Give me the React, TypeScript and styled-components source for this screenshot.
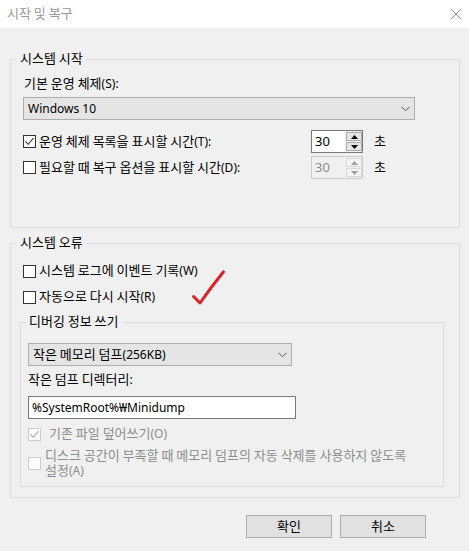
import React from 'react';
import styled, { createGlobalStyle } from 'styled-components';

const GlobalStyle = createGlobalStyle`
  html, body {
    margin: 0;
    padding: 0;
    background: #f0f0f0;
  }
  body {
    font-family: "Noto Sans", "Noto Sans CJK KR", sans-serif;
    font-size: 12px;
    color: #000;
  }
`;

// Hangul runs are a touch larger than the Latin text, like Malgun Gothic next to Segoe UI
const Hangul = styled.span`
  font-family: "Noto Sans CJK KR", sans-serif;
  font-size: 13px;
  line-height: 1;
`;

const T: React.FC<{ children: string }> = ({ children }) => {
  const parts = children.split(/([\uAC00-\uD7A3]+(?: [\uAC00-\uD7A3]+)*)/);
  return (
    <>
      {parts.map((p, i) => (i % 2 === 1 ? <Hangul key={i}>{p}</Hangul> : p))}
    </>
  );
};

const Window = styled.div`
  position: relative;
  width: 469px;
  height: 551px;
  background: #f0f0f0;
  overflow: hidden;
`;

const TitleBar = styled.div`
  box-sizing: border-box;
  height: 28px;
  padding: 0 7px;
  background: #fff;
  display: flex;
  align-items: center;
  justify-content: space-between;
`;

const Title = styled.span`
  color: #999;
  line-height: 16px;
`;

const Body = styled.div`
  padding: 23px 9px 0 10px;
`;

const Group = styled.fieldset<{ $width: number; $pad: string; $mt?: number }>`
  box-sizing: border-box;
  width: ${(p) => p.$width}px;
  min-width: 0;
  margin: ${(p) => p.$mt || 0}px 0 0;
  padding: ${(p) => p.$pad};
  border: 1px solid #dcdcdc;
`;

const Legend = styled.legend<{ $shift: number }>`
  padding: 0 3px;
  margin-left: ${(p) => p.$shift}px;
  line-height: 16px;
`;

const Label = styled.div<{ $mt?: number; $ml?: number }>`
  margin-top: ${(p) => p.$mt || 0}px;
  margin-left: ${(p) => p.$ml || 0}px;
  line-height: 16px;
`;

const Select = styled.div<{ $width: number; $mt?: number }>`
  box-sizing: border-box;
  width: ${(p) => p.$width}px;
  height: 23px;
  margin-top: ${(p) => p.$mt || 0}px;
  padding: 0 4px;
  background: #e5e5e5;
  border: 1px solid #adadad;
  display: flex;
  align-items: center;
  justify-content: space-between;
  line-height: 16px;
`;

const TextBox = styled.div<{ $width: number; $mt?: number }>`
  box-sizing: border-box;
  width: ${(p) => p.$width}px;
  height: 23px;
  margin-top: ${(p) => p.$mt || 0}px;
  padding: 0 3px;
  background: #fff;
  border: 1px solid #7a7a7a;
  display: flex;
  align-items: center;
  line-height: 16px;
`;

const OptionRow = styled.div<{ $mt: number }>`
  display: grid;
  grid-template-columns: 288px 52px auto;
  align-items: center;
  height: 23px;
  margin-top: ${(p) => p.$mt}px;
`;

const CheckRow = styled.div<{ $mt?: number; $gap?: number; $ml?: number; $disabled?: boolean }>`
  display: flex;
  align-items: center;
  gap: ${(p) => p.$gap ?? 3}px;
  margin-top: ${(p) => p.$mt || 0}px;
  margin-left: ${(p) => p.$ml || 0}px;
  line-height: 16px;
  color: ${(p) => (p.$disabled ? '#8d8d8d' : '#000')};
`;

const Box = styled.span<{ $disabled?: boolean }>`
  box-sizing: border-box;
  flex: none;
  width: 13px;
  height: 13px;
  background: ${(p) => (p.$disabled ? '#fcfcfc' : '#fff')};
  border: 1px solid ${(p) => (p.$disabled ? '#cccccc' : '#333')};
  display: flex;
  align-items: center;
  justify-content: center;
`;

const MultiLine = styled.span`
  line-height: 15px;
`;

const Spinner = styled.div<{ $disabled?: boolean }>`
  box-sizing: border-box;
  width: 52px;
  height: 23px;
  display: flex;
  background: ${(p) => (p.$disabled ? '#f0f0f0' : '#fff')};
  border: 1px solid ${(p) => (p.$disabled ? '#cccccc' : '#7a7a7a')};
  color: ${(p) => (p.$disabled ? '#8d8d8d' : '#000')};
`;

const SpinValue = styled.span`
  flex: 1;
  padding-left: 3px;
  font-size: 13px;
  line-height: 21px;
`;

const SpinButtons = styled.div`
  box-sizing: border-box;
  width: 17px;
  display: flex;
  flex-direction: column;
  gap: 1px;
  padding: 1px 0 1px 1px;
  background: #f0f0f0;
`;

const SpinButton = styled.span<{ $disabled?: boolean }>`
  flex: 1;
  box-sizing: border-box;
  background: ${(p) => (p.$disabled ? '#f4f4f4' : '#e5e5e5')};
  border: 1px solid ${(p) => (p.$disabled ? '#d9d9d9' : '#adadad')};
  display: flex;
  align-items: center;
  justify-content: center;
`;

const Unit = styled.span`
  margin-left: 11px;
  line-height: 16px;
`;

const Footer = styled.div`
  display: flex;
  justify-content: flex-end;
  gap: 8px;
  margin-top: 17px;
  padding-right: 34px;
`;

const Button = styled.button`
  box-sizing: border-box;
  width: 86px;
  height: 23px;
  padding: 0;
  background: #e1e1e1;
  border: 1px solid #adadad;
  border-radius: 0;
  font-family: inherit;
  font-size: 12px;
  color: #000;
`;

const Annotation = styled.svg`
  position: absolute;
  left: 190px;
  top: 268px;
`;

const Check: React.FC<{ checked?: boolean; disabled?: boolean }> = ({ checked, disabled }) => (
  <Box $disabled={disabled}>
    {checked && (
      <svg width="11" height="11" viewBox="0 0 11 11">
        <path d="M1.5 5.5 L4.2 8.3 L9.5 2.2" fill="none" stroke={disabled ? '#a8a8a8' : '#333'} strokeWidth="1.1" />
      </svg>
    )}
  </Box>
);

const Chevron = () => (
  <svg width="9" height="6" viewBox="0 0 9 6">
    <path d="M0.5 0.8 L4.5 4.8 L8.5 0.8" fill="none" stroke="#555" strokeWidth="1" />
  </svg>
);

const Arrow: React.FC<{ up?: boolean; disabled?: boolean }> = ({ up, disabled }) => (
  <svg width="7" height="4" viewBox="0 0 7 4">
    <path d={up ? 'M0 4 L3.5 0 L7 4 Z' : 'M0 0 L3.5 4 L7 0 Z'} fill={disabled ? '#a0a0a0' : '#000'} />
  </svg>
);

const Spin: React.FC<{ value: string; disabled?: boolean }> = ({ value, disabled }) => (
  <Spinner $disabled={disabled}>
    <SpinValue>{value}</SpinValue>
    <SpinButtons>
      <SpinButton $disabled={disabled}><Arrow up disabled={disabled} /></SpinButton>
      <SpinButton $disabled={disabled}><Arrow disabled={disabled} /></SpinButton>
    </SpinButtons>
  </Spinner>
);

export default function App() {
  return (
    <>
      <GlobalStyle />
      <Window>
        <TitleBar>
          <Title><T>시작 및 복구</T></Title>
          <svg width="12" height="12" viewBox="0 0 12 12">
            <path d="M1 1 L11 11 M11 1 L1 11" stroke="#8a8a8a" strokeWidth="1" />
          </svg>
        </TitleBar>
        <Body>
          <Group $width={450} $pad="9px 12px 48px">
            <Legend $shift={-6}><T>시스템 시작</T></Legend>
            <Label $ml={1}><T>기본 운영 체제(S):</T></Label>
            <Select $width={392} $mt={5}>
              <span>Windows 10</span>
              <Chevron />
            </Select>
            <OptionRow $mt={10}>
              <CheckRow>
                <Check checked />
                <span><T>운영 체제 목록을 표시할 시간(T):</T></span>
              </CheckRow>
              <Spin value="30" />
              <Unit><T>초</T></Unit>
            </OptionRow>
            <OptionRow $mt={3}>
              <CheckRow>
                <Check />
                <span><T>필요할 때 복구 옵션을 표시할 시간(D):</T></span>
              </CheckRow>
              <Spin value="30" disabled />
              <Unit><T>초</T></Unit>
            </OptionRow>
          </Group>

          <Group $width={450} $pad="12px 9px 10px" $mt={7}>
            <Legend $shift={-3}><T>시스템 오류</T></Legend>
            <CheckRow $ml={3}>
              <Check />
              <span><T>시스템 로그에 이벤트 기록(W)</T></span>
            </CheckRow>
            <CheckRow $ml={3} $mt={10}>
              <Check />
              <span><T>자동으로 다시 시작(R)</T></span>
            </CheckRow>

            <Group $width={424} $pad="13px 7px 8px" $mt={9}>
              <Legend $shift={-2}><T>디버깅 정보 쓰기</T></Legend>
              <Select $width={264}>
                <span><T>작은 메모리 덤프(256KB)</T></span>
                <Chevron />
              </Select>
              <Label $mt={6}><T>작은 덤프 디렉터리:</T></Label>
              <TextBox $width={268} $mt={8}>%SystemRoot%₩Minidump</TextBox>
              <CheckRow $mt={7} $gap={8} $disabled>
                <Check checked disabled />
                <span><T>기존 파일 덮어쓰기(O)</T></span>
              </CheckRow>
              <CheckRow $mt={6} $gap={4} $disabled>
                <Check disabled />
                <MultiLine>
                  <T>디스크 공간이 부족할 때 메모리 덤프의 자동 삭제를 사용하지 않도록</T>
                  <br />
                  <T>설정(A)</T>
                </MultiLine>
              </CheckRow>
            </Group>
          </Group>

          <Footer>
            <Button><T>확인</T></Button>
            <Button><T>취소</T></Button>
          </Footer>
        </Body>

        <Annotation width="36" height="38" viewBox="0 0 36 38">
          <path d="M3.5 28.5 Q7 32 10 35 Q22 18 33.5 3.8" fill="none" stroke="#d8232a" strokeWidth="3" strokeLinecap="round" strokeLinejoin="round" />
        </Annotation>
      </Window>
    </>
  );
}
